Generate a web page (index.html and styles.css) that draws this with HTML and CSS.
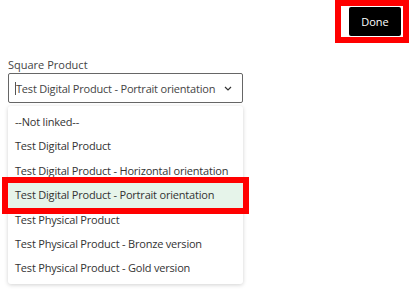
FILE: index.html
```html
<!DOCTYPE html>
<html lang="en">

<head>
  <meta charset="UTF-8">
  <meta name="viewport" content="width=device-width, initial-scale=1.0">
  <title>Square Product</title>
  <link rel="stylesheet" href="styles.css">
</head>

<body>
  <div class="page">
    <!-- Top bar with the Done button -->
    <div class="top-bar">
      <div class="mark-frame">
        <button class="done-btn">Done</button>
      </div>
    </div>

    <!-- Product picker -->
    <div class="field">
      <label class="field-label">Square Product</label>
      <div class="select-box">
        <span class="caret"></span>
        <span class="select-value">Test Digital Product - Portrait orientation</span>
        <svg class="chevron" width="8" height="5" viewBox="0 0 8 5">
          <path d="M1 1 L4 4 L7 1" fill="none" stroke="#333" stroke-width="1.2" />
        </svg>
      </div>

      <ul class="option-list">
        <li class="option">--Not linked--</li>
        <li class="option">Test Digital Product</li>
        <li class="option">Test Digital Product - Horizontal orientation</li>
        <li class="option selected">Test Digital Product - Portrait orientation</li>
        <li class="option">Test Physical Product</li>
        <li class="option">Test Physical Product - Bronze version</li>
        <li class="option">Test Physical Product - Gold version</li>
      </ul>
    </div>
  </div>
</body>

</html>
```

FILE: styles.css
```css
/* General Reset */
* {
  margin: 0;
  padding: 0;
  box-sizing: border-box;
}

body {
  font-family: 'Open Sans', sans-serif;
  background-color: #fff;
  color: #333;
  width: 414px;
  height: 300px;
  overflow: hidden;
}

.page {
  padding: 0 5px 0 8px;
}

/* Done button with red highlight frame */
.top-bar {
  display: flex;
  justify-content: flex-end;
}

.mark-frame {
  border: 6px solid #ff0000;
  padding: 1px 2px 0 8px;
  height: 43px;
}

.done-btn {
  width: 52px;
  height: 29px;
  background-color: #000;
  color: #fff;
  border: none;
  border-radius: 2px;
  font-family: 'Open Sans', sans-serif;
  font-size: 11px;
}

/* Product field */
.field {
  width: 235px;
  margin-top: 15px;
}

.field-label {
  display: block;
  font-size: 11px;
  color: #444;
  line-height: 13px;
  margin-bottom: 2px;
}

.select-box {
  display: flex;
  align-items: center;
  height: 30px;
  padding: 0 10px 0 6px;
  border: 1px solid #666;
  border-radius: 2px;
  font-size: 11px;
  letter-spacing: -0.2px;
  white-space: nowrap;
}

.caret {
  width: 1px;
  height: 13px;
  background-color: #555;
}

.select-value {
  flex: 1;
  color: #444;
}

.option-list {
  list-style: none;
  margin-top: 3px;
  padding: 4px 0 3px;
  background-color: #fff;
  border-radius: 3px;
  box-shadow: 0 1px 4px rgba(0, 0, 0, 0.18);
}

.option {
  height: 24.4px;
  line-height: 24.4px;
  padding-left: 7px;
  font-size: 11px;
  letter-spacing: -0.2px;
  color: #333;
  white-space: nowrap;
}

.option.selected {
  background-color: #e6f4ea;
  outline: 6px solid #ff0000;
  position: relative;
}
```
